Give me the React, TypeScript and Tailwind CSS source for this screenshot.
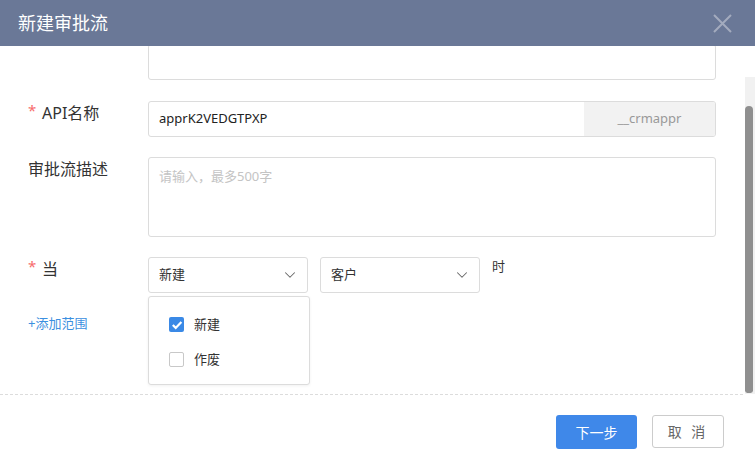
import React from "react";
import { ChevronDown } from "lucide-react";

const font = { fontFamily: '"Noto Sans", "Noto Sans CJK SC", sans-serif' };

const Label = ({ text, required }: { text: string; required?: boolean }) => (
  <div className="w-[148px] shrink-0 pl-[28px] text-[16px] leading-[24px] text-[#333] relative">
    {required && <span className="absolute left-[28px] -top-[3px] text-[15px] text-[#f76d6d]">*</span>}
    <span className={required ? "pl-[14px]" : ""}>{text}</span>
  </div>
);

const Select = ({ value }: { value: string }) => (
  <div className="w-[160px] h-[36px] border border-[#dcdcdc] rounded-[3px] flex items-center justify-between pl-[10px] pr-[8px] text-[13px] text-[#333]">
    <span>{value}</span>
    <ChevronDown size={18} strokeWidth={1.4} className="text-[#666]" />
  </div>
);

const Check = ({ checked, text }: { checked?: boolean; text: string }) => (
  <div className="flex items-center h-[35px] pl-[20px] gap-[10px] text-[13px] text-[#333]">
    {checked ? (
      <span className="w-[15px] h-[15px] rounded-[2px] bg-[#3a89e6] flex items-center justify-center">
        <svg width="12" height="12" viewBox="0 0 12 12">
          <path d="M1.8 6 L4.7 8.9 L10.4 2.9" stroke="white" strokeWidth="2.2" fill="none" />
        </svg>
      </span>
    ) : (
      <span className="w-[15px] h-[15px] rounded-[2px] border border-[#c8c8c8] bg-white" />
    )}
    <span>{text}</span>
  </div>
);

const App: React.FC = () => {
  return (
    <div className="w-[755px] h-[467px] bg-white flex flex-col overflow-hidden" style={font}>
      <div className="h-[46px] shrink-0 bg-[#6a7897] flex items-center justify-between pl-[18px] pr-[23px]">
        <span className="text-[18px] text-white">新建审批流</span>
        <svg width="19" height="19" viewBox="0 0 19 19">
          <path d="M1 1 L18 18 M18 1 L1 18" stroke="#a3abbe" strokeWidth="2" />
        </svg>
      </div>

      <div className="h-[348px] flex">
        <div className="flex-1 overflow-hidden">
          <div className="flex -mt-[2px]">
            <div className="w-[148px] shrink-0" />
            <div className="w-[568px] h-[36px] border border-[#dcdcdc] rounded-[3px]" />
          </div>

          <div className="flex mt-[21px]">
            <Label text="API名称" required />
            <div className="w-[568px] h-[36px] border border-[#dcdcdc] rounded-[3px] flex overflow-hidden">
              <div className="flex-1 flex items-center pl-[10px] text-[13px] text-[#222]">apprK2VEDGTPXP</div>
              <div className="w-[131px] bg-[#f2f2f2] flex items-center justify-center text-[13px] text-[#999]">__crmappr</div>
            </div>
          </div>

          <div className="flex mt-[20px]">
            <Label text="审批流描述" />
            <div className="w-[568px] h-[80px] border border-[#dcdcdc] rounded-[3px] pl-[10px] pt-[9px] text-[13px] text-[#c4c4c4]">
              请输入，最多500字
            </div>
          </div>

          <div className="flex mt-[20px]">
            <Label text="当" required />
            <div className="relative flex gap-[12px]">
              <Select value="新建" />
              <Select value="客户" />
              <span className="text-[13px] leading-[18px] text-[#333]">时</span>
              <div className="absolute left-0 top-[39px] w-[162px] h-[89px] bg-white border border-[#dcdcdc] rounded-[3px] shadow-[0_1px_3px_rgba(0,0,0,0.06)] pt-[10px]">
                <Check checked text="新建" />
                <Check text="作废" />
              </div>
            </div>
          </div>

          <div className="mt-[18px] pl-[28px] text-[13px] leading-[24px] text-[#3b8fe0]">+添加范围</div>
        </div>

        <div className="w-[10px] shrink-0 flex flex-col pt-[31px]">
          <div className="flex-1 bg-[#f1f1f1] pt-[29px] pb-[1px] pr-[2px] flex flex-col">
            <div className="flex-1 bg-[#8f8f8f] rounded-t-[5px] rounded-b-[3px]" />
          </div>
        </div>
      </div>

      <div className="flex-1 flex flex-col">
        <div className="mr-[12px] border-t border-dashed border-[#dcdcdc]" />
        <div className="flex justify-end gap-[15px] pr-[31px] pt-[20px]">
          <button className="w-[81px] h-[34px] rounded-[3px] bg-[#3f88e9] text-white text-[14px]">下一步</button>
          <button className="w-[72px] h-[33px] rounded-[3px] border border-[#cccccc] bg-white text-[#666] text-[14px] tracking-[3px]">取 消</button>
        </div>
      </div>
    </div>
  );
};

export default App;
